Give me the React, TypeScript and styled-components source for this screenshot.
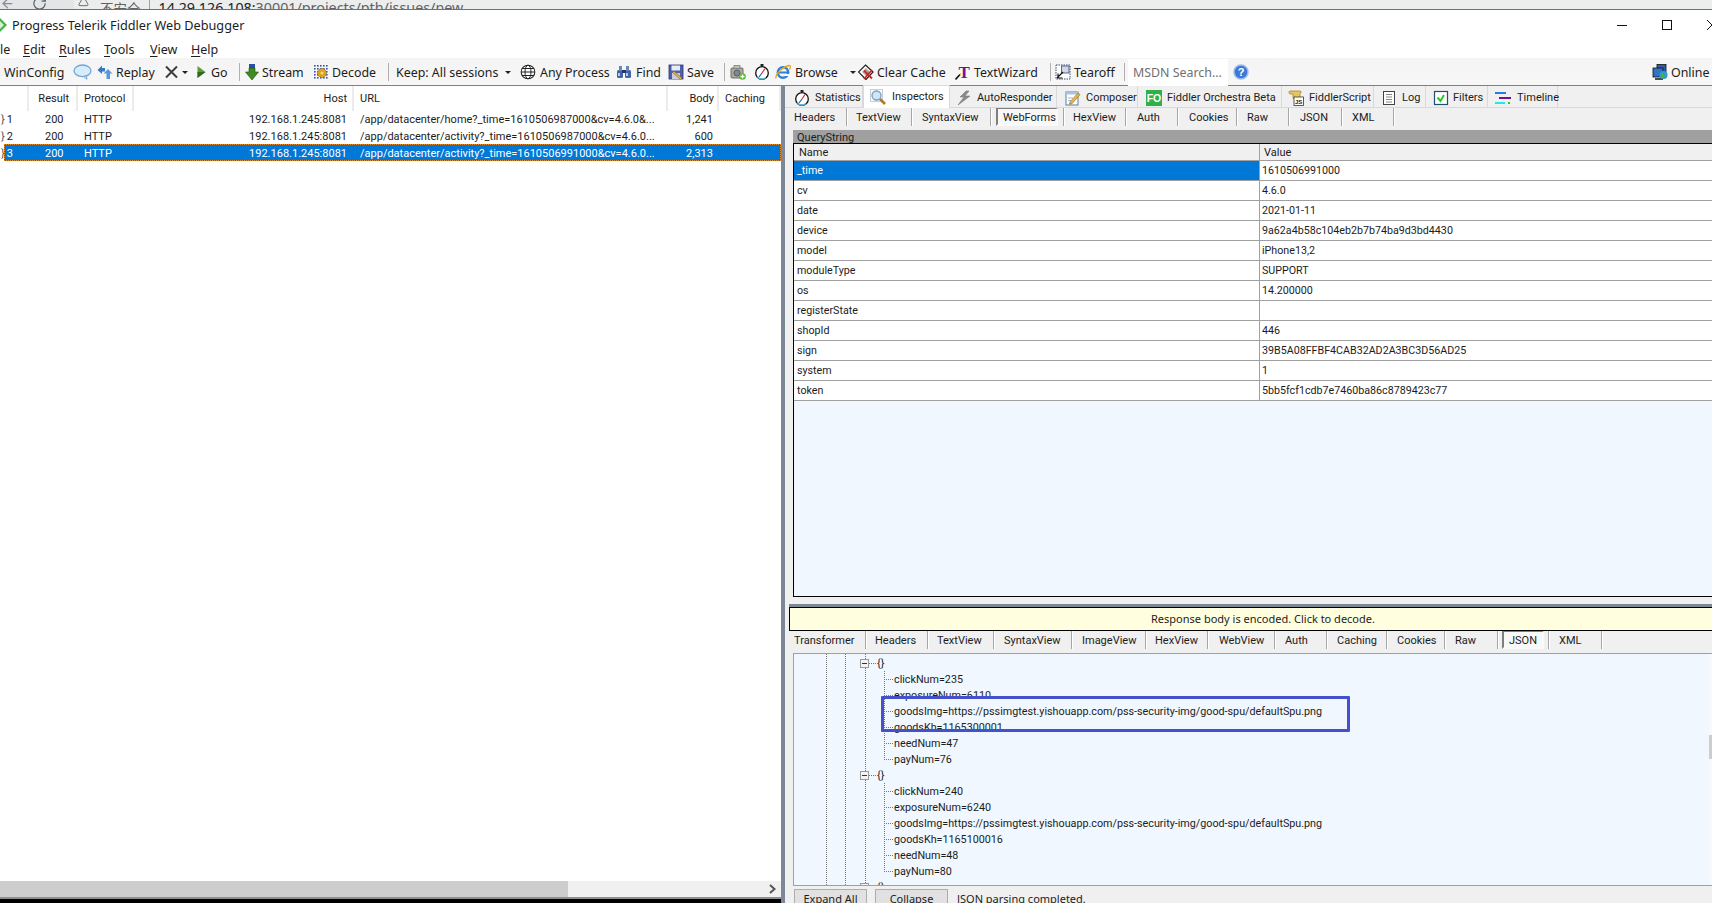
import React, {FC} from "react";
import styled, {createGlobalStyle, css} from "styled-components";
import {ArrowLeft, RotateCw, Triangle} from "lucide-react";

const FONT = `"Noto Sans", "Open Sans", sans-serif`;
const GRID_FONT = `Roboto, "Noto Sans", sans-serif`;

const GlobalStyle = createGlobalStyle`
  html, body {
    margin: 0;
    padding: 0;
    width: 1712px;
    height: 903px;
    overflow: hidden;
    background: #fff;
    font-family: ${FONT};
    color: #1c1c1c;
  }
  * { box-sizing: border-box; }
  svg { flex: none; }
`;

/* ---------- icons ---------- */

const Svg: FC<{w?: number; children: React.ReactNode}> = ({w = 16, children}) => (
    <svg width={w} height="16" viewBox={`0 0 ${w} 16`}>{children}</svg>
);

const IconComment = () => (
    <Svg w={19}>
        <ellipse cx="9.500" cy="6.800" rx="8.500" ry="5.800" fill="#d8ecfb" stroke="#6ea6dc" strokeWidth="1.300"/>
        <path d="M11 12.300c.5 1.200 1.500 2.200 3 2.900-.4-1.200-.5-2.300-.2-3.500z" fill="#d8ecfb" stroke="#6ea6dc"/>
    </Svg>
);
const IconReplay = () => (
    <Svg>
        <path d="M.5 6L5 1.500V4h3v3.500H5V10z" fill="#3b78c4"/>
        <path d="M11 5l4.500 4.500H13v5.500H9.500V9.500H6.500z" fill="#5b97dd"/>
    </Svg>
);
const IconRemove = () => (
    <Svg w={13}><path d="M1 2.500l11 11M12 2.500l-11 11" stroke="#3d3d3d" strokeWidth="2" fill="none"/></Svg>
);
const IconGo = () => (
    <Svg w={10}><path d="M.5 2l8 6-8 6z" fill="#5c9a3c"/><path d="M.5 8h8l-8 6z" fill="#2f6b1e"/></Svg>
);
const IconStream = () => (
    <Svg w={14}>
        <rect x="4" y="0" width="6" height="4" fill="#2a4fa8"/>
        <path d="M4 4h6v4h3.500L7 16 .5 8H4z" fill="#3f8a22" stroke="#1f4f12" strokeWidth=".6"/>
    </Svg>
);
const IconDecode = () => (
    <Svg>
        {[1, 4, 7, 10, 13].map(y => [1, 4, 7, 10, 13].map(x => (
            <rect key={`${x}-${y}`} x={x} y={y} width="1.600" height="1.600" fill="#3a4fb0"/>
        )))}
        <circle cx="9" cy="9" r="4.500" fill="#d9a520" stroke="#8a6a10" strokeWidth=".8" strokeDasharray="1.500 1"/>
        <circle cx="9" cy="9" r="1.500" fill="#f3dc80"/>
    </Svg>
);
const IconGlobe = () => (
    <Svg>
        <circle cx="8" cy="8" r="6.800" fill="#fff" stroke="#222" strokeWidth="1.100"/>
        <ellipse cx="8" cy="8" rx="3" ry="6.800" fill="none" stroke="#222"/>
        <path d="M1.200 8h13.600M2.200 4.500h11.600M2.200 11.500h11.600" stroke="#222" fill="none"/>
    </Svg>
);
const IconFind = () => (
    <Svg>
        <rect x="1" y="6" width="6" height="8" rx="1.500" fill="#3f63a8"/>
        <rect x="9" y="6" width="6" height="8" rx="1.500" fill="#3f63a8"/>
        <rect x="3" y="2" width="3" height="5" fill="#6a86c0"/>
        <rect x="10" y="2" width="3" height="5" fill="#6a86c0"/>
        <rect x="6" y="6" width="4" height="3" fill="#26385f"/>
        <rect x="2" y="9" width="2" height="3" fill="#b8c8e8"/>
        <rect x="10" y="9" width="2" height="3" fill="#b8c8e8"/>
    </Svg>
);
const IconSave = () => (
    <Svg>
        <rect x="1" y="1" width="14" height="14" fill="#4f5fb0" stroke="#2b3478" strokeWidth=".8"/>
        <rect x="3.500" y="1.500" width="8.500" height="5" fill="#e8ecf6"/>
        <rect x="4" y="9" width="8" height="6" fill="#c9cfe2"/>
        <path d="M6 7l8 7-1.500 1.500-8-7z" fill="#e0b040" stroke="#7a5a10" strokeWidth=".5"/>
    </Svg>
);
const IconCamera = () => (
    <Svg>
        <rect x="1" y="4" width="12" height="10" rx="1" fill="#a9a9a0" stroke="#6e6e68"/>
        <rect x="4" y="1.500" width="6" height="3" fill="#bdbdb4" stroke="#77776f" strokeWidth=".7"/>
        <circle cx="7" cy="9" r="3" fill="#7d8a92" stroke="#55605e"/>
        <circle cx="12.500" cy="12.500" r="3.300" fill="#57b62e"/>
        <path d="M12.500 10.500v4M10.500 12.500h4" stroke="#fff" strokeWidth="1.300"/>
    </Svg>
);
const IconTimer = () => (
    <Svg>
        <rect x="6.500" y="0" width="3" height="2" fill="#222"/>
        <circle cx="8" cy="9" r="6.300" fill="#fff" stroke="#111" strokeWidth="1.300"/>
        <path d="M8 9L11 4.500" stroke="#d22" strokeWidth="1.200"/>
        <path d="M8 9L5 13" stroke="#26b" strokeWidth="1.200"/>
        <path d="M3 12.500a6 6 0 0 0 9 1" stroke="#5bd" strokeWidth="1.200" fill="none"/>
    </Svg>
);
const IconIE = () => (
    <Svg>
        <circle cx="8" cy="8.500" r="5.200" fill="none" stroke="#2f7fd6" strokeWidth="2.500"/>
        <rect x="3.500" y="7.500" width="9.500" height="2" fill="#2f7fd6"/>
        <rect x="9" y="10" width="6" height="2" fill="#f6f6f6"/>
        <path d="M1 14.500C0 11 7 3 14 1.500c2-.3 1.500 2 .5 4" fill="none" stroke="#e6a817" strokeWidth="1.300"/>
    </Svg>
);
const IconClear = () => (
    <Svg>
        <path d="M7.500 1L15 8l-7 7.500L.5 8z" fill="#fff" stroke="#222" strokeWidth="1.200"/>
        <path d="M4 8l4-4 4 4-4 4z" fill="#aaa"/>
        <path d="M6 6.500l8 8M14 6l-8 9" stroke="#d2231d" strokeWidth="1.800"/>
    </Svg>
);
const IconTextWizard = () => (
    <Svg>
        <text x="3.500" y="14" fontFamily='"Liberation Serif", serif' fontWeight="700" fontSize="17" fill="#7a0f8c">T</text>
        <path d="M.500 15.500L5 10.500" stroke="#111" strokeWidth="1.600"/>
        <path d="M5 10.500l1-1" stroke="#f2c200" strokeWidth="1.600"/>
    </Svg>
);
const IconTearoff = () => (
    <Svg>
        <rect x="1" y="1" width="14" height="14" fill="#fff" stroke="#3c4a6b" strokeDasharray="1.500 1"/>
        <rect x="6.500" y="2" width="7.500" height="7" fill="#cfd9ea" stroke="#3c4a6b" strokeWidth=".8"/>
        <path d="M2 14l6-6M3 9.500V14h4.500" stroke="#111" strokeWidth="1.200" fill="none"/>
    </Svg>
);
const IconHelp = () => (
    <Svg>
        <circle cx="8" cy="8" r="7" fill="#3d78d8" stroke="#9dbbea" strokeWidth="1.500"/>
        <text x="8" y="12" textAnchor="middle" fontFamily='"Liberation Sans", sans-serif' fontWeight="700" fontSize="11" fill="#fff">?</text>
    </Svg>
);
const IconOnline = () => (
    <Svg>
        <rect x="5" y="0.500" width="9" height="8" fill="#2a5ea8" stroke="#111" strokeWidth=".8"/>
        <rect x="1" y="4" width="10" height="9" fill="#2f73c4" stroke="#111" strokeWidth=".8"/>
        <path d="M3 15h8" stroke="#111" strokeWidth="1.500"/>
        <circle cx="11.500" cy="11" r="4" fill="#2f9ad0"/>
        <path d="M9 10c2-1.500 3 0 3.500 1.500s-1 3-2 3z" fill="#4ab52e"/>
    </Svg>
);
const IconInspectors = () => (
    <Svg>
        <rect x="0.500" y="0.500" width="12" height="12" fill="none" stroke="#8a9ab0" strokeDasharray="1 1"/>
        <circle cx="6.500" cy="6.500" r="4.500" fill="#cfe6fa" stroke="#7b9cc0" strokeWidth="1.300"/>
        <path d="M10 10l5 5" stroke="#b07a28" strokeWidth="2.600"/>
    </Svg>
);
const IconAutoResponder = () => (
    <Svg><path d="M10 1L4 7h4L2 15l12-9H9l4-5z" fill="#8c8c8c" stroke="#6f6f6f" strokeWidth=".5"/></Svg>
);
const IconComposer = () => (
    <Svg>
        <rect x="1" y="2" width="12" height="13" fill="#fff" stroke="#5a7ba8"/>
        <rect x="1" y="2" width="12" height="2.500" fill="#a9c3e2"/>
        <path d="M3 8h5M3 10.500h3" stroke="#a7b5c9"/>
        <path d="M5 12l8-9 2 1.700-8 9-2.500.5z" fill="#e8b84a" stroke="#8a6518" strokeWidth=".6"/>
    </Svg>
);
const IconOrchestra = () => (
    <Svg>
        <rect x="0" y="0" width="16" height="16" fill="#2eb04a"/>
        <text x="8" y="12" textAnchor="middle" fontFamily='"Liberation Sans", sans-serif' fontWeight="700" fontSize="10.500" fill="#fff">FO</text>
    </Svg>
);
const IconScript = () => (
    <Svg>
        <path d="M2 1h10c1.500 0 1.500 2 0 2.500v5H5V4H2.500C.5 4 .5 1 2 1z" fill="#e6c65c" stroke="#9a7d1c" strokeWidth=".7"/>
        <rect x="6" y="7" width="9.500" height="8.500" fill="#fff" stroke="#333" strokeWidth=".8"/>
        <text x="10.700" y="14" textAnchor="middle" fontFamily='"Liberation Sans", sans-serif' fontWeight="700" fontSize="6" fill="#222">JS</text>
    </Svg>
);
const IconLog = () => (
    <Svg>
        <rect x="2.500" y="1.500" width="11" height="13" fill="#fff" stroke="#444"/>
        <path d="M5 4.500h6M5 7h6M5 9.500h6M5 12h6" stroke="#888"/>
    </Svg>
);
const IconFilters = () => (
    <Svg>
        <rect x="1.500" y="1.500" width="13" height="13" fill="#fff" stroke="#1f4e79" strokeWidth="1.200"/>
        <path d="M4.500 7.500l3 3.500 3.500-6" stroke="#1fd01f" strokeWidth="2" fill="none"/>
    </Svg>
);
const IconTimeline = () => (
    <Svg>
        <rect x="0" y="2" width="11" height="2" fill="#1a7fe8"/>
        <rect x="4" y="7" width="12" height="2" fill="#7a0f8c"/>
        <rect x="0" y="12" width="10" height="2" fill="#1fe8e8"/>
        <rect x="13" y="12" width="2" height="2" fill="#1fd01f"/>
    </Svg>
);

/* ---------- browser strip + title ---------- */

const BrowserStrip = styled.div`
  height: 10px;
  display: flex;
  overflow: hidden;
  background: #e4e5e7;
  border-bottom: 1px solid #1e88d6;
  color: #5f6368;
`;

const NavIcon = styled.span<{$w: number}>`
  width: ${p => p.$w}px;
  flex: none;
  margin-top: -6px;
`;

const Omnibox = styled.div`
  flex: 1;
  display: flex;
  background: #eceded;
  margin-left: 9px;
  padding-left: 4px;
  font-size: 14.300px;
  line-height: 16px;
  white-space: nowrap;
`;

const LockText = styled.span`
  font-family: "Noto Sans CJK SC", ${FONT};
  font-size: 13.500px;
  margin-left: 10px;
  padding-right: 8px;
  margin-right: 9px;
  border-right: 1px solid #a0a0a0;
`;

const Host = styled.span`
  color: #222;
`;

const TitleBar = styled.div`
  height: 30px;
  display: flex;
  align-items: center;
  font-size: 12.700px;
`;

const Logo = styled.svg`
  margin-left: -7px;
  margin-right: 5px;
  flex: none;
`;

const WindowButtons = styled.div`
  margin-left: auto;
  display: flex;
  align-items: center;
  width: 95px;
  flex: none;
  gap: 35px;
`;

const MinButton = styled.span`
  width: 10px;
  height: 1px;
  flex: none;
  background: #111;
`;

const MaxButton = styled.span`
  width: 10px;
  height: 10px;
  flex: none;
  border: 1px solid #111;
`;

const MenuBar = styled.div`
  height: 18px;
  display: flex;
  font-size: 12.500px;
  line-height: 19px;
`;

const MenuItem = styled.span<{$w: number}>`
  width: ${p => p.$w}px;
  flex: none;
  overflow: hidden;
  white-space: nowrap;
  u { text-decoration-thickness: 1px; text-underline-offset: 2px; }
`;

/* ---------- toolbar ---------- */

const ToolBar = styled.div`
  height: 28px;
  display: flex;
  align-items: center;
  padding-top: 1px;
  background: linear-gradient(#f4f4f4, #f7f7f7);
  border-bottom: 1px solid #808080;
  font-size: 12.400px;
  white-space: nowrap;
`;

const Tool = styled.div<{$w: number; $gap?: number; $pl?: number}>`
  width: ${p => p.$w}px;
  flex: none;
  display: flex;
  align-items: center;
  gap: ${p => p.$gap ?? 3}px;
  padding-left: ${p => p.$pl ?? 1}px;
`;

const ToolSep = styled.span<{$w?: number}>`
  width: ${p => p.$w ?? 8}px;
  flex: none;
  height: 18px;
  display: flex;
  justify-content: center;
  &::before {
    content: "";
    width: 1px;
    background: #b0b0b0;
  }
`;

const Caret = styled.span<{$ml?: number}>`
  flex: none;
  width: 0;
  height: 0;
  margin-left: ${p => p.$ml ?? 0}px;
  border-left: 3px solid transparent;
  border-right: 3px solid transparent;
  border-top: 3px solid #222;
`;

const SearchBox = styled.div`
  width: 100px;
  height: 27px;
  flex: none;
  background: #fff;
  color: #6f6f6f;
  padding-left: 5px;
  line-height: 27px;
`;

const OnlineTool = styled(Tool)`
  margin-left: auto;
  width: 61px;
  gap: 3px;
`;

/* ---------- main split ---------- */

const Main = styled.div`
  height: 817px;
  display: flex;
`;

const SessionsPane = styled.div`
  width: 781px;
  flex: none;
  display: flex;
  flex-direction: column;
  background: #fff;
  font-family: ${GRID_FONT};
  font-size: 11px;
`;

const COLUMNS = css`
  display: grid;
  grid-template-columns: 25px 49px 56px 220px 314px 51px 62px;
`;

const HeaderRow = styled.div`
  ${COLUMNS};
  height: 24px;
  margin-left: 4px;
`;

const HeaderCell = styled.div<{$right?: boolean; $pad: number}>`
  line-height: 25px;
  border-right: 2px solid #ececec;
  text-align: ${p => (p.$right ? "right" : "left")};
  ${p => (p.$right ? `padding-right: ${p.$pad}px;` : `padding-left: ${p.$pad}px;`)}
`;

const SessionRow = styled.div<{$selected?: boolean}>`
  ${COLUMNS};
  height: 17px;
  margin-left: 4px;
  line-height: 19px;
  white-space: nowrap;
  ${p => p.$selected && css`
    background: #0078d7;
    color: #fff;
    outline: 1px dotted #e08a2c;
    outline-offset: -1px;
  `}
`;

const SessionCell = styled.div<{$right?: boolean; $pad: number}>`
  text-align: ${p => (p.$right ? "right" : "left")};
  ${p => (p.$right ? `padding-right: ${p.$pad}px;` : `padding-left: ${p.$pad}px;`)}
`;

const RowGlyph = styled.span`
  margin-left: -6px;
  margin-right: 2px;
  color: #555;
`;

const SessionsFill = styled.div`
  flex: 1;
`;

const SessionsScroll = styled.div`
  height: 16px;
  flex: none;
  display: flex;
  align-items: center;
  justify-content: flex-end;
  background: #f0f0f0;
  position: relative;
  padding-right: 4px;
`;

const ScrollThumb = styled.div`
  position: absolute;
  left: 0;
  top: 0;
  bottom: 0;
  width: 568px;
  background: #cdcdcd;
`;

const Console = styled.div`
  height: 6px;
  flex: none;
  background: #000;
  border-top: 2px solid #8e8e8e;
`;

const VSplitter = styled.div`
  width: 4px;
  flex: none;
  background: #7d8896;
`;

const InspectorPane = styled.div`
  flex: 1;
  min-width: 0;
  display: flex;
  flex-direction: column;
  background: #f0f0f0;
  font-family: ${GRID_FONT};
  font-size: 11px;
`;

/* ---------- tabs ---------- */

const MainTabs = styled.div`
  height: 22px;
  flex: none;
  display: flex;
  padding-left: 3px;
  border-bottom: 1px solid #d9d9d9;
  white-space: nowrap;
`;

const MainTab = styled.div<{$w: number; $pl: number; $gap: number; $active?: boolean}>`
  width: ${p => p.$w}px;
  flex: none;
  display: flex;
  align-items: center;
  padding-left: ${p => p.$pl}px;
  padding-top: 2px;
  gap: ${p => p.$gap}px;
  border-right: 1px solid #d9d9d9;
  ${p => p.$active && css`
    background: #fff;
    height: 23px;
    margin-top: -1px;
    padding-top: 0;
    padding-bottom: 1px;
    border: 1px solid #d9d9d9;
    border-bottom: none;
    z-index: 1;
  `}
`;

const SubTabs = styled.div`
  height: 18px;
  flex: none;
  display: flex;
  margin-bottom: 4px;
  white-space: nowrap;
`;

const SubTab = styled.div<{$w: number; $pl: number}>`
  width: ${p => p.$w}px;
  height: 18px;
  flex: none;
  padding-left: ${p => p.$pl}px;
  line-height: 19px;
  border-right: 1px solid #a6a6a6;
  box-shadow: 1px 0 0 #fff;
`;

const ActiveFrame = styled.div<{$w: number}>`
  width: ${p => p.$w}px;
  height: 18px;
  padding-left: 5px;
  line-height: 18px;
  background: #f8f8f8;
  border: 2px solid;
  border-color: #7f7f7f #fafafa #fafafa #7f7f7f;
  border-top-width: 1px;
`;

/* ---------- web forms ---------- */

const FormsPanel = styled.div`
  height: 467px;
  flex: none;
  margin-left: 8px;
  display: flex;
  flex-direction: column;
  background: #f0f7ff;
  border-left: 1px solid #000;
  border-bottom: 1px solid #000;
`;

const QueryBar = styled.div`
  height: 14px;
  flex: none;
  margin-left: -1px;
  padding-left: 4px;
  line-height: 15px;
  background: #a0a0a0;
  border-bottom: 1px solid #000;
  overflow: hidden;
`;

const ParamGrid = styled.div`
  display: grid;
  grid-template-columns: 466px 1fr;
`;

const ParamHead = styled.div<{$last?: boolean}>`
  height: 17px;
  line-height: 18px;
  padding-left: ${p => (p.$last ? 4 : 5)}px;
  background: #f0f0f0;
  border-bottom: 1px solid #a0a0a0;
  border-right: ${p => (p.$last ? "none" : "1px solid #a0a0a0")};
`;

const ParamCell = styled.div<{$selected?: boolean; $last?: boolean}>`
  height: 20px;
  line-height: 20px;
  font-size: 10.700px;
  padding-left: ${p => (p.$last ? 2 : 3)}px;
  background: ${p => (p.$selected ? "#0078d7" : "#fff")};
  color: ${p => (p.$selected ? "#fff" : "#1c1c1c")};
  border-bottom: 1px solid #a0a0a0;
  border-right: ${p => (p.$last ? "none" : "1px solid #a0a0a0")};
`;

const VerticalGap = styled.div`
  height: 7px;
  flex: none;
`;

const HSplitter = styled.div`
  height: 3px;
  flex: none;
  margin-left: 4px;
  background: #7d8896;
`;

const Notice = styled.div`
  height: 24px;
  flex: none;
  margin-left: 4px;
  padding-left: 24px;
  text-align: center;
  line-height: 22px;
  font-family: ${FONT};
  background: #ffffe0;
  border: 1px solid #000;
  border-width: 1px 0 1px 1px;
`;

/* ---------- json tree ---------- */

const dotted = (x: number) => `linear-gradient(#777 50%, transparent 50%) ${x}px 0 / 1px 2px repeat-y`;

const TreePane = styled.div`
  height: 233px;
  flex: none;
  margin-left: 8px;
  display: flex;
  border: 1px solid #a0a0a0;
  border-right: none;
  background: #f0f7ff;
`;

const TreeBody = styled.div`
  flex: 1;
  position: relative;
  overflow: hidden;
  padding-top: 1px;
  font-size: 10.750px;
  background: ${dotted(32)}, ${dotted(51)}, ${dotted(71)};
`;

const ObjectRow = styled.div`
  height: 16px;
  display: flex;
  align-items: center;
  padding-left: 66px;
`;

const Expander = styled.span`
  width: 9px;
  height: 9px;
  flex: none;
  display: flex;
  align-items: center;
  justify-content: center;
  background: #f4f4f4;
  border: 1px solid #9a9a9a;
  &::before {
    content: "";
    width: 5px;
    height: 1px;
    background: #333;
  }
`;

const BraceDots = styled.span`
  width: 7px;
  flex: none;
  margin-right: 1px;
  border-bottom: 1px dotted #777;
`;

const LeafRow = styled.div`
  height: 16px;
  display: flex;
  align-items: center;
  padding-left: 90px;
  white-space: nowrap;
`;

const Connector = styled.span<{$last?: boolean}>`
  width: 10px;
  height: ${p => (p.$last ? 9 : 16)}px;
  align-self: flex-start;
  flex: none;
  background:
    linear-gradient(#777 50%, transparent 50%) 0 0 / 1px 2px repeat-y,
    linear-gradient(90deg, #777 50%, transparent 50%) 0 8px / 2px 1px repeat-x;
`;

const Highlight = styled.div`
  position: absolute;
  left: 87px;
  top: 42px;
  width: 469px;
  height: 36px;
  border: 3px solid #4450cc;
  border-radius: 1px;
`;

const TreeScroll = styled.div`
  width: 3px;
  flex: none;
  background: #f7f9fc;
  padding-top: 81px;
`;

const TreeThumb = styled.div`
  height: 24px;
  background: #cdcdcd;
`;

const FooterBar = styled.div`
  flex: 1;
  min-height: 0;
  overflow: hidden;
  display: flex;
  gap: 8px;
  padding: 3px 0 0 9px;
  align-items: flex-start;
  font-family: ${FONT};
`;

const FooterButton = styled.div`
  width: 73px;
  height: 22px;
  flex: none;
  text-align: center;
  line-height: 18px;
  background: #e1e1e1;
  border: 1px solid #adadad;
`;

const FooterStatus = styled.div`
  margin-left: 1px;
  line-height: 20px;
`;

/* ---------- data ---------- */

const SESSIONS = [
    {id: 1, url: "/app/datacenter/home?_time=1610506987000&cv=4.6.0&...", body: "1,241"},
    {id: 2, url: "/app/datacenter/activity?_time=1610506987000&cv=4.6.0...", body: "600"},
    {id: 3, url: "/app/datacenter/activity?_time=1610506991000&cv=4.6.0...", body: "2,313", selected: true},
];

const PARAMS = [
    ["_time", "1610506991000"],
    ["cv", "4.6.0"],
    ["date", "2021-01-11"],
    ["device", "9a62a4b58c104eb2b7b74ba9d3bd4430"],
    ["model", "iPhone13,2"],
    ["moduleType", "SUPPORT"],
    ["os", "14.200000"],
    ["registerState", ""],
    ["shopId", "446"],
    ["sign", "39B5A08FFBF4CAB32AD2A3BC3D56AD25"],
    ["system", "1"],
    ["token", "5bb5fcf1cdb7e7460ba86c8789423c77"],
];

const REQUEST_TABS: [string, number, number, number?][] = [
    ["Headers", 62, 9],
    ["TextView", 65, 9],
    ["SyntaxView", 79, 10],
    ["WebForms", 73, 5, 62],
    ["HexView", 62, 9],
    ["Auth", 52, 11],
    ["Cookies", 59, 11],
    ["Raw", 52, 10],
    ["JSON", 53, 11],
    ["XML", 52, 10],
];

const RESPONSE_TABS: [string, number, number, number?][] = [
    ["Transformer", 81, 9],
    ["Headers", 62, 9],
    ["TextView", 66, 9],
    ["SyntaxView", 78, 10],
    ["ImageView", 74, 10],
    ["HexView", 62, 9],
    ["WebView", 67, 11],
    ["Auth", 52, 10],
    ["Caching", 60, 10],
    ["Cookies", 58, 10],
    ["Raw", 53, 10],
    ["JSON", 51, 4, 42],
    ["XML", 53, 10],
];

const TREE = [
    ["clickNum=235", "exposureNum=6110", "goodsImg=https://pssimgtest.yishouapp.com/pss-security-img/good-spu/defaultSpu.png", "goodsKh=1165300001", "needNum=47", "payNum=76"],
    ["clickNum=240", "exposureNum=6240", "goodsImg=https://pssimgtest.yishouapp.com/pss-security-img/good-spu/defaultSpu.png", "goodsKh=1165100016", "needNum=48", "payNum=80"],
];

const TabRow: FC<{tabs: [string, number, number, number?][]}> = ({tabs}) => (
    <SubTabs>
        {tabs.map(([label, w, pl, frame]) => (
            <SubTab key={label} $w={w} $pl={pl}>
                {frame ? <ActiveFrame $w={frame}>{label}</ActiveFrame> : label}
            </SubTab>
        ))}
    </SubTabs>
);

export default function App() {
    return (
        <>
            <GlobalStyle/>
            <BrowserStrip>
                <NavIcon $w={32}><ArrowLeft size={15} color="#8a8d91"/></NavIcon>
                <NavIcon $w={33}><RotateCw size={15}/></NavIcon>
                <Omnibox>
                    <NavIcon $w={12}><Triangle size={11}/></NavIcon>
                    <LockText>不安全</LockText>
                    <Host>14.29.126.108:</Host>30001/projects/pth/issues/new
                </Omnibox>
            </BrowserStrip>

            <TitleBar>
                <Logo width="14" height="14" viewBox="0 0 14 14">
                    <path d="M7 0l7 7-7 7-7-7z" fill="#3fb24a"/>
                    <path d="M7 3l4 4-4 4z" fill="#d6f0d0"/>
                </Logo>
                Progress Telerik Fiddler Web Debugger
                <WindowButtons>
                    <MinButton/>
                    <MaxButton/>
                    <svg width="10" height="10" viewBox="0 0 10 10">
                        <path d="M0 0l10 10M10 0L0 10" stroke="#111" strokeWidth="1" fill="none"/>
                    </svg>
                </WindowButtons>
            </TitleBar>

            <MenuBar>
                <MenuItem $w={23}>le</MenuItem>
                <MenuItem $w={36}><u>E</u>dit</MenuItem>
                <MenuItem $w={45}><u>R</u>ules</MenuItem>
                <MenuItem $w={46}><u>T</u>ools</MenuItem>
                <MenuItem $w={41}><u>V</u>iew</MenuItem>
                <MenuItem $w={40}><u>H</u>elp</MenuItem>
            </MenuBar>

            <ToolBar>
                <Tool $w={72} $pl={4}>WinConfig</Tool>
                <Tool $w={24}><IconComment/></Tool>
                <Tool $w={68}><IconReplay/>Replay</Tool>
                <Tool $w={32} $gap={4}><IconRemove/><Caret/></Tool>
                <Tool $w={38} $gap={4}><IconGo/>Go</Tool>
                <ToolSep $w={10}/>
                <Tool $w={68} $gap={3}><IconStream/>Stream</Tool>
                <Tool $w={70} $gap={3}><IconDecode/>Decode</Tool>
                <ToolSep $w={13}/>
                <Tool $w={124} $gap={7}>Keep: All sessions<Caret/></Tool>
                <Tool $w={96} $gap={4}><IconGlobe/>Any Process</Tool>
                <Tool $w={52} $gap={4}><IconFind/>Find</Tool>
                <Tool $w={53} $gap={3}><IconSave/>Save</Tool>
                <ToolSep $w={9}/>
                <Tool $w={24}><IconCamera/></Tool>
                <Tool $w={21}><IconTimer/></Tool>
                <Tool $w={83} $gap={4}><IconIE/>Browse<Caret $ml={8}/></Tool>
                <Tool $w={97} $gap={3}><IconClear/>Clear Cache</Tool>
                <Tool $w={92} $gap={3}><IconTextWizard/>TextWizard</Tool>
                <ToolSep $w={8}/>
                <Tool $w={67} $gap={3}><IconTearoff/>Tearoff</Tool>
                <ToolSep $w={7}/>
                <SearchBox>MSDN Search...</SearchBox>
                <Tool $w={24} $pl={5}><IconHelp/></Tool>
                <OnlineTool><IconOnline/>Online</OnlineTool>
            </ToolBar>

            <Main>
                <SessionsPane>
                    <HeaderRow>
                        <HeaderCell $pad={0}/>
                        <HeaderCell $right $pad={7}>Result</HeaderCell>
                        <HeaderCell $pad={6}>Protocol</HeaderCell>
                        <HeaderCell $right $pad={5}>Host</HeaderCell>
                        <HeaderCell $pad={6}>URL</HeaderCell>
                        <HeaderCell $right $pad={3}>Body</HeaderCell>
                        <HeaderCell $pad={6}>Caching</HeaderCell>
                    </HeaderRow>
                    {SESSIONS.map(s => (
                        <SessionRow key={s.id} $selected={s.selected}>
                            <SessionCell $pad={3}><RowGlyph>{"}"}</RowGlyph>{s.id}</SessionCell>
                            <SessionCell $pad={16}>200</SessionCell>
                            <SessionCell $pad={6}>HTTP</SessionCell>
                            <SessionCell $right $pad={7}>192.168.1.245:8081</SessionCell>
                            <SessionCell $pad={6}>{s.url}</SessionCell>
                            <SessionCell $right $pad={6}>{s.body}</SessionCell>
                            <SessionCell $pad={0}/>
                        </SessionRow>
                    ))}
                    <SessionsFill/>
                    <SessionsScroll>
                        <ScrollThumb/>
                        <svg width="8" height="10" viewBox="0 0 8 10">
                            <path d="M1 1l4.500 4L1 9" fill="none" stroke="#555" strokeWidth="2"/>
                        </svg>
                    </SessionsScroll>
                    <Console/>
                </SessionsPane>

                <VSplitter/>

                <InspectorPane>
                    <MainTabs>
                        <MainTab $w={75} $pl={6} $gap={5}><IconTimer/>Statistics</MainTab>
                        <MainTab $active $w={87} $pl={6} $gap={6}><IconInspectors/>Inspectors</MainTab>
                        <MainTab $w={107} $pl={6} $gap={5}><IconAutoResponder/>AutoResponder</MainTab>
                        <MainTab $w={81} $pl={8} $gap={5}><IconComposer/>Composer</MainTab>
                        <MainTab $w={144} $pl={8} $gap={5}><IconOrchestra/>Fiddler Orchestra Beta</MainTab>
                        <MainTab $w={92} $pl={6} $gap={5}><IconScript/>FiddlerScript</MainTab>
                        <MainTab $w={52} $pl={7} $gap={5}><IconLog/>Log</MainTab>
                        <MainTab $w={62} $pl={7} $gap={4}><IconFilters/>Filters</MainTab>
                        <MainTab $w={70} $pl={7} $gap={6}><IconTimeline/>Timeline</MainTab>
                    </MainTabs>
                    <TabRow tabs={REQUEST_TABS}/>

                    <FormsPanel>
                        <QueryBar>QueryString</QueryBar>
                        <ParamGrid>
                            <ParamHead>Name</ParamHead>
                            <ParamHead $last>Value</ParamHead>
                            {PARAMS.map(([name, value], i) => (
                                <React.Fragment key={name}>
                                    <ParamCell $selected={i === 0}>{name}</ParamCell>
                                    <ParamCell $last>{value}</ParamCell>
                                </React.Fragment>
                            ))}
                        </ParamGrid>
                    </FormsPanel>

                    <VerticalGap/>
                    <HSplitter/>
                    <Notice>Response body is encoded. Click to decode.</Notice>
                    <TabRow tabs={RESPONSE_TABS}/>

                    <TreePane>
                        <TreeBody>
                            {TREE.map((leaves, i) => (
                                <React.Fragment key={i}>
                                    <ObjectRow><Expander/><BraceDots/>{"{}"}</ObjectRow>
                                    {leaves.map((leaf, j) => (
                                        <LeafRow key={leaf}>
                                            <Connector $last={j === leaves.length - 1}/>{leaf}
                                        </LeafRow>
                                    ))}
                                </React.Fragment>
                            ))}
                            <ObjectRow><Expander/><BraceDots/>{"{}"}</ObjectRow>
                            <Highlight/>
                        </TreeBody>
                        <TreeScroll><TreeThumb/></TreeScroll>
                    </TreePane>

                    <FooterBar>
                        <FooterButton>Expand All</FooterButton>
                        <FooterButton>Collapse</FooterButton>
                        <FooterStatus>JSON parsing completed.</FooterStatus>
                    </FooterBar>
                </InspectorPane>
            </Main>
        </>
    );
}
